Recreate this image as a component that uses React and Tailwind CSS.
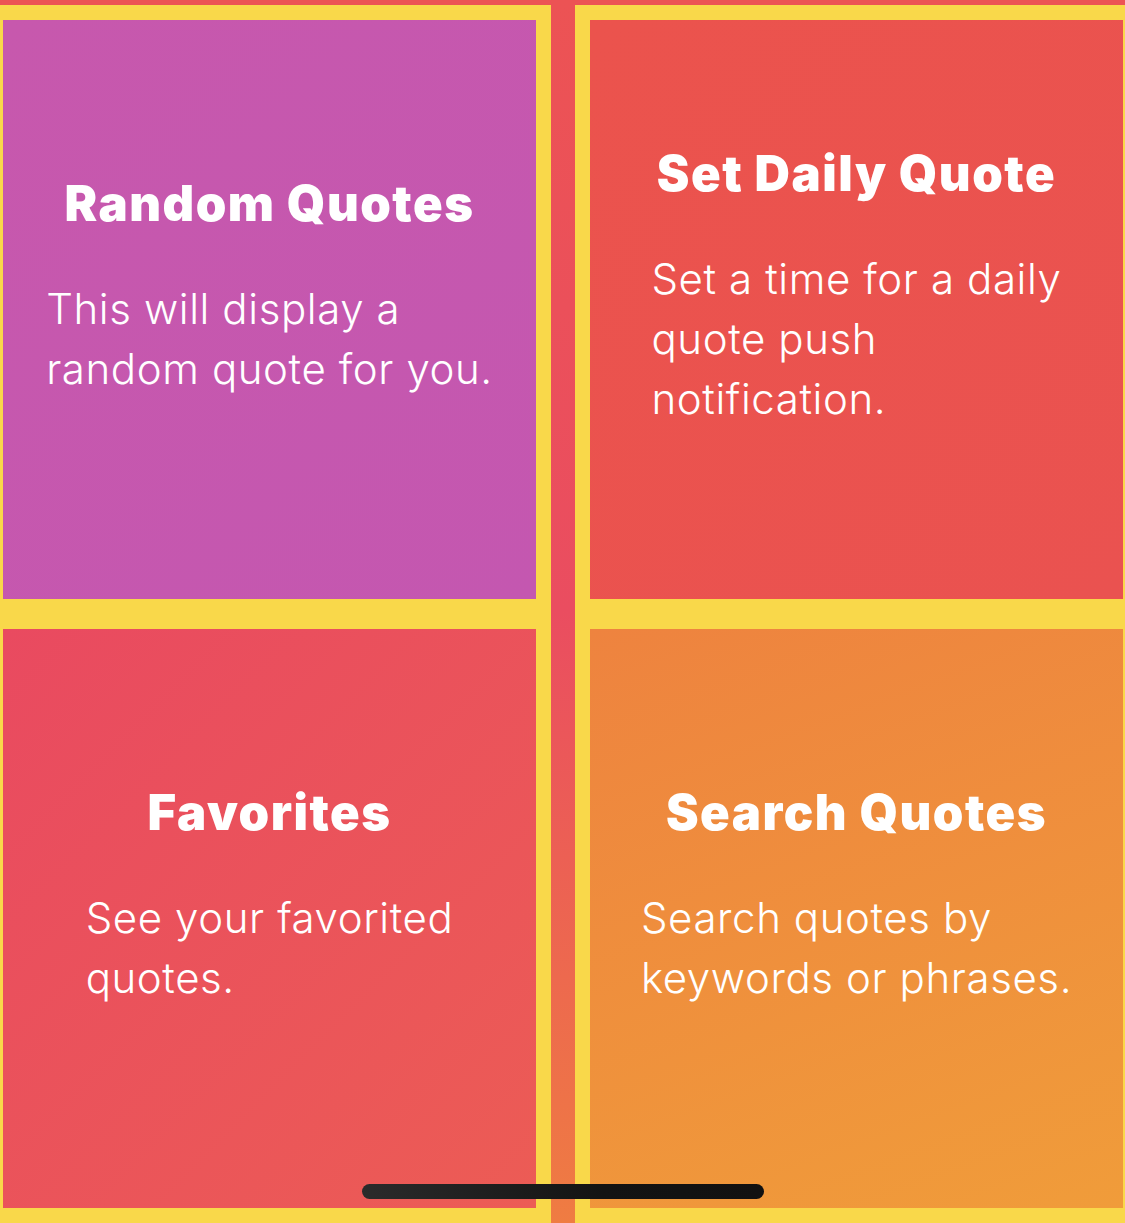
import React from "react";

const cards = [
  [
    {
      title: "Random Quotes",
      lines: ["This will display a", "random quote for you."],
      bg: "bg-[linear-gradient(135deg,#C758AD,#C457B0)]",
    },
    {
      title: "Favorites",
      lines: ["See your favorited", "quotes."],
      bg: "bg-[linear-gradient(135deg,#E94A60,#EC5C55)]",
    },
  ],
  [
    {
      title: "Set Daily Quote",
      lines: ["Set a time for a daily", "quote push", "notification."],
      bg: "bg-[linear-gradient(135deg,#EB534D,#EA5250)]",
    },
    {
      title: "Search Quotes",
      lines: ["Search quotes by", "keywords or phrases."],
      bg: "bg-[linear-gradient(160deg,#EE833F,#F09C3A)]",
    },
  ],
];

function Card({ card }) {
  return (
    <div className="w-[563px] h-[609px] border-[15px] border-[#F9D84A] shrink-0">
      <div
        className={`w-full h-full ${card.bg} flex flex-col items-center justify-center pb-[40px] text-white`}
        style={{ fontFamily: "Inter, 'Noto Sans', sans-serif" }}
      >
        <div className="text-[49px] leading-[48px] font-black tracking-[1.5px] whitespace-nowrap">
          {card.title}
        </div>
        <div className="mt-[51px] text-[42px] leading-[60px] font-light tracking-[0.6px] whitespace-nowrap">
          {card.lines.map((l, i) => (
            <div key={i}>{l}</div>
          ))}
        </div>
      </div>
    </div>
  );
}

export default function App() {
  return (
    <div className="relative w-[1125px] h-[1223px] overflow-hidden bg-[linear-gradient(180deg,#EC5354_0%,#EA4D60_50%,#EF7C42_100%)]">
      <div className="flex gap-[24px] pt-[5px] ml-[-12px]">
        {cards.map((col, ci) => (
          <div key={ci} className="flex flex-col">
            {col.map((c, i) => (
              <Card key={i} card={c} />
            ))}
          </div>
        ))}
      </div>
      <div className="absolute left-[362px] top-[1184px] w-[402px] h-[15px] rounded-full bg-[linear-gradient(90deg,#2B2B2B,#131313_60%,#111111)]" />
    </div>
  );
}
